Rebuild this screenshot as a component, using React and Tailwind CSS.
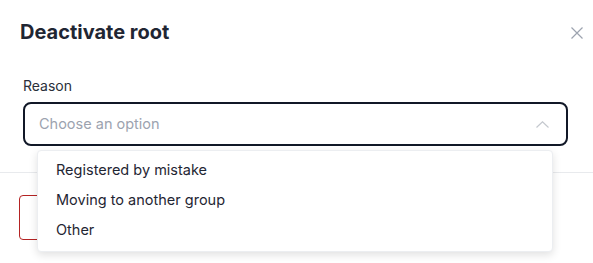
import React from "react";

export default function App() {
  return (
    <div
      className="relative w-[593px] h-[263px] overflow-hidden bg-white"
      style={{ fontFamily: "Inter, 'Noto Sans', sans-serif" }}
    >
      <div className="flex items-start justify-between pl-5 pr-[10px] pt-[18px]">
        <h2 className="text-[20px] leading-[28px] font-bold text-[#1f2633]">Deactivate root</h2>
        <button className="mt-[9px] w-[12px] h-[12px] text-[#9ca3af]" aria-label="Close">
          <svg viewBox="0 0 12 12" width="12" height="12" fill="none" stroke="currentColor" strokeWidth="1.2">
            <path d="M0.5 0.5 L11.5 11.5 M11.5 0.5 L0.5 11.5" />
          </svg>
        </button>
      </div>

      <div className="px-[23px] pt-[30px]">
        <div className="text-[14px] leading-[20px] text-[#2a2f3a]">Reason</div>
        <div className="mt-[6px] flex h-[44px] w-[545px] items-center justify-between rounded-lg border-2 border-[#111827] pl-[14px] pr-[17px]">
          <span className="text-[14.5px] text-[#9ca3af]">Choose an option</span>
          <svg viewBox="0 0 13 7" width="13" height="7" fill="none" stroke="#c4c8ce" strokeWidth="1.2">
            <path d="M0.5 6.5 L6.5 0.8 L12.5 6.5" />
          </svg>
        </div>
      </div>

      <div className="mt-[26px] border-t border-[#e8eaed]" />
      <div className="px-[19px] pt-[22px]">
        <button aria-label="Deactivate" className="h-[45px] w-[110px] rounded border border-[#b42323]" />
      </div>

      <div className="absolute left-[37px] top-[150px] z-10 w-[516px] rounded border border-[#eceef1] bg-white pt-[4px] pb-[6px] shadow-[0_3px_8px_rgba(0,0,0,0.12)]">
        {["Registered by mistake", "Moving to another group", "Other"].map((t) => (
          <div key={t} className="flex h-[30px] items-center px-[18px] text-[14.5px] text-[#1f2633]">
            {t}
          </div>
        ))}
      </div>
    </div>
  );
}
